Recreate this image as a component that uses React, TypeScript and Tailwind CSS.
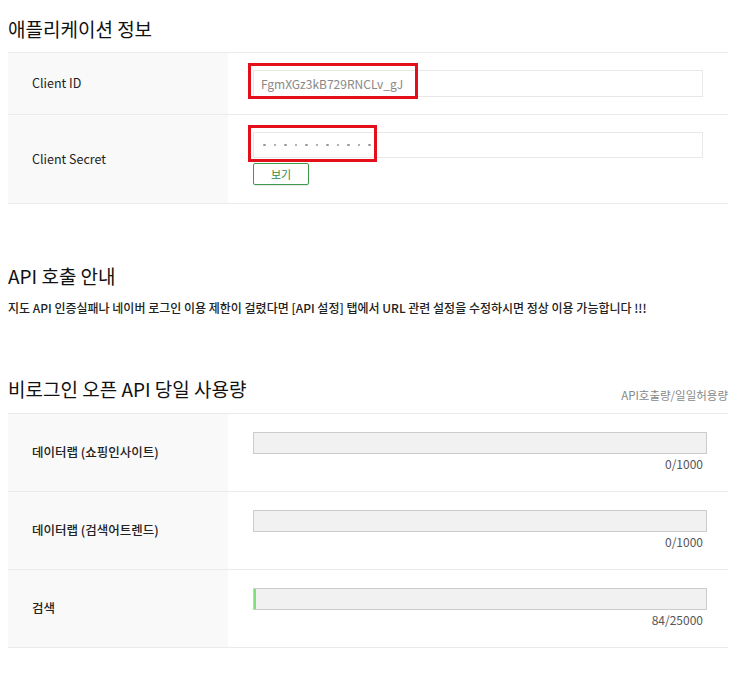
import React from 'react';

const usage = [
  { label: '데이터랩 (쇼핑인사이트)', used: 0, limit: 1000 },
  { label: '데이터랩 (검색어트렌드)', used: 0, limit: 1000 },
  { label: '검색', used: 84, limit: 25000 },
];

function Highlight({ className }: { className: string }) {
  return <div className={`pointer-events-none absolute border-[3px] border-[#e3101c] ${className}`} />;
}

export default function App() {
  return (
    <div
      className="min-h-[691px] w-[750px] bg-white text-[#222]"
      style={{ fontFamily: "'Noto Sans CJK KR', 'Noto Sans', sans-serif" }}
    >
      <div className="ml-2 w-[720px] pt-[17px]">
        {/* 애플리케이션 정보 */}
        <h2 className="text-[19px] leading-[24px] text-[#111]">애플리케이션 정보</h2>
        <div className="mt-[11px] border-t border-[#ebebeb]">
          <div className="flex h-[62px] border-b border-[#ebebeb]">
            <div className="flex w-[220px] items-center bg-[#f9f9f9] pl-6 text-[12.5px] text-[#222]">
              Client ID
            </div>
            <div className="flex flex-1 items-center pl-[25px]">
              <div className="relative">
                <div className="flex h-[27px] w-[450px] items-center border border-[#e8e8e8] pl-[7px] text-[12px] text-[#888]">
                  FgmXGz3kB729RNCLv_gJ
                </div>
                <Highlight className="left-[-5px] top-[-7px] h-[36px] w-[170px]" />
              </div>
            </div>
          </div>
          <div className="flex h-[89px] border-b border-[#ebebeb]">
            <div className="flex w-[220px] items-center bg-[#f9f9f9] pl-6 text-[12.5px] text-[#222]">
              Client Secret
            </div>
            <div className="flex flex-1 flex-col pl-[25px] pt-[17px]">
              <div className="relative">
                <div className="flex h-[26px] w-[450px] items-center gap-[8px] border border-[#e8e8e8] pl-[9px]">
                  {Array.from({ length: 11 }).map((_, i) => (
                    <span key={i} className="h-[2.5px] w-[2.5px] rounded-full bg-[#999]" />
                  ))}
                </div>
                <Highlight className="left-[-5px] top-[-7px] h-[37px] w-[129px]" />
              </div>
              <button className="mt-[5px] flex h-[22px] w-[56px] items-center justify-center rounded-[2px] border border-[#3f9a4f] text-[11px] text-[#2f8a3f] shadow-[0_1px_1px_rgba(0,0,0,0.1)]">
                보기
              </button>
            </div>
          </div>
        </div>

        {/* API 호출 안내 */}
        <h2 className="mt-[60px] text-[19px] leading-[24px] text-[#111]">API 호출 안내</h2>
        <p className="mt-[11px] text-[12px] font-medium leading-[18px] text-[#222]">
          지도 API 인증실패나 네이버 로그인 이용 제한이 걸렸다면 [API 설정] 탭에서 URL 관련 설정을 수정하시면 정상 이용 가능합니다 !!!
        </p>

        {/* 사용량 */}
        <div className="mt-[60px] flex h-[24px] items-start justify-between">
          <h2 className="text-[19px] leading-[24px] text-[#111]">비로그인 오픈 API 당일 사용량</h2>
          <span className="mt-[10px] text-[11.5px] leading-[16px] text-[#888]">API호출량/일일허용량</span>
        </div>
        <div className="mt-[12px] border-t border-[#ebebeb]">
          {usage.map((u) => (
            <div key={u.label} className="flex h-[78px] border-b border-[#ebebeb]">
              <div className="flex w-[220px] items-center bg-[#f9f9f9] pl-6 text-[12.5px] font-medium text-[#222]">
                {u.label}
              </div>
              <div className="flex flex-1 flex-col pl-[25px] pt-[18px]">
                <div className="flex h-[22px] w-[454px] border border-[#cccccc] bg-[#f1f1f1]">
                  {u.used > 0 && (
                    <div
                      className="h-full bg-[#7ee07a]"
                      style={{ width: Math.max(2, (u.used / u.limit) * 452) }}
                    />
                  )}
                </div>
                <div className="mt-[2px] w-[454px] pr-[4px] text-right text-[12px] leading-[16px] text-[#555]">
                  {u.used}/{u.limit}
                </div>
              </div>
            </div>
          ))}
        </div>
      </div>
    </div>
  );
}
